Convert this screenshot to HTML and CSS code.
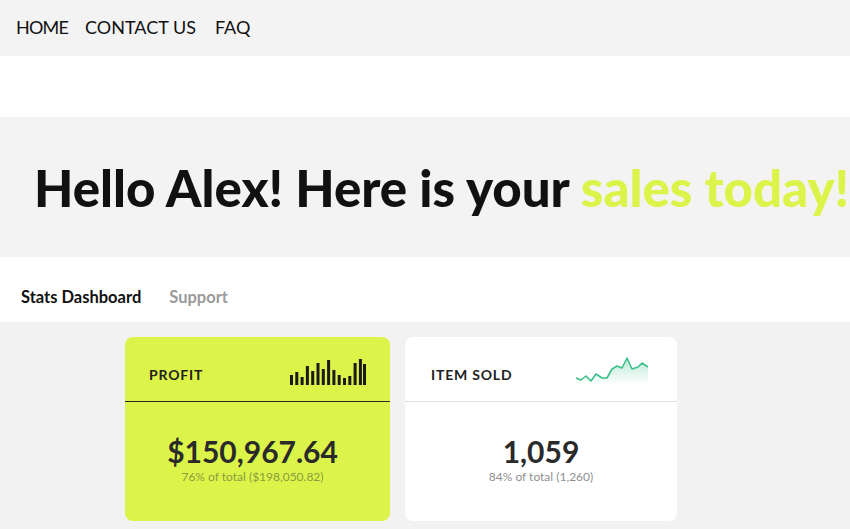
FILE: index.html
```html
<!DOCTYPE html>
<html>
<head>
<meta charset="utf-8">
<link rel="stylesheet" href="styles.css">
</head>
<body>
<nav class="topnav">
  <a class="navlink">HOME</a>
  <a class="navlink">CONTACT US</a>
  <a class="navlink">FAQ</a>
</nav>
<div class="spacer"></div>
<header class="hero">
  <h1 class="hero-title">Hello Alex! Here is your <span class="accent">sales today!</span></h1>
</header>
<div class="tabs">
  <span class="tab active">Stats Dashboard</span>
  <span class="tab">Support</span>
</div>
<main class="content">
  <section class="card card-lime">
    <div class="card-head">
      <span class="card-label">PROFIT</span>
      <svg class="bars" width="76" height="26" viewBox="0 0 76 26">
        <g fill="#1a1a1a">
          <rect x="0" y="16" width="3" height="10"/>
          <rect x="5.3" y="13" width="3" height="13"/>
          <rect x="10.6" y="18" width="3" height="8"/>
          <rect x="15.9" y="7" width="3" height="19"/>
          <rect x="21.2" y="12" width="3" height="14"/>
          <rect x="26.5" y="4" width="3" height="22"/>
          <rect x="31.8" y="10" width="3" height="16"/>
          <rect x="37.1" y="1" width="3" height="25"/>
          <rect x="42.4" y="11" width="3" height="15"/>
          <rect x="47.7" y="16" width="3" height="10"/>
          <rect x="53" y="19" width="3" height="7"/>
          <rect x="58.3" y="17" width="3" height="9"/>
          <rect x="63.6" y="4" width="3" height="22"/>
          <rect x="68.9" y="0" width="3" height="26"/>
          <rect x="73" y="5" width="3" height="21"/>
        </g>
      </svg>
    </div>
    <div class="card-body">
      <div class="card-value">$150,967.64</div>
      <div class="card-sub">76% of total ($198,050.82)</div>
    </div>
  </section>
  <section class="card card-white">
    <div class="card-head">
      <span class="card-label">ITEM SOLD</span>
      <svg class="spark" width="76" height="28" viewBox="0 0 76 28">
        <defs>
          <linearGradient id="sg" x1="0" y1="0" x2="0" y2="1">
            <stop offset="0" stop-color="#3cbf8a" stop-opacity="0.35"/>
            <stop offset="1" stop-color="#3cbf8a" stop-opacity="0"/>
          </linearGradient>
        </defs>
        <path d="M1 21 L6 23 L11 19 L16 24 L21 17 L27 21 L32 21 L37 12 L42 9 L47 11 L52 1 L57 12 L63 10 L67 6 L73 10 L73 28 L1 28 Z" fill="url(#sg)"/>
        <path d="M1 21 L6 23 L11 19 L16 24 L21 17 L27 21 L32 21 L37 12 L42 9 L47 11 L52 1 L57 12 L63 10 L67 6 L73 10" fill="none" stroke="#3cbf8a" stroke-width="1.6" stroke-linejoin="round"/>
      </svg>
    </div>
    <div class="card-body">
      <div class="card-value">1,059</div>
      <div class="card-sub">84% of total (1,260)</div>
    </div>
  </section>
</main>
</body>
</html>
```

FILE: styles.css
```css
* { box-sizing: border-box; }
html, body { margin: 0; padding: 0; }
body {
  background: #f3f2f3;
  font-family: "Lato", "Noto Sans", sans-serif;
  color: #111;
  width: 850px;
  height: 529px;
  overflow: hidden;
}
.topnav {
  height: 56px;
  background: #f3f3f3;
  display: flex;
  align-items: center;
  padding-left: 16px;
  padding-bottom: 3px;
  gap: 17px;
}
.navlink {
  font-family: "Lato", sans-serif;
  font-size: 18px;
  font-weight: 400;
  color: #111;
}
.navlink:first-child { letter-spacing: -0.8px; }
.navlink:nth-child(3) { margin-left: 2px; }
.spacer { height: 61px; background: #fff; }
.hero {
  height: 140px;
  background: #f3f3f3;
  display: flex;
  align-items: center;
  padding-left: 34px;
  overflow: hidden;
  white-space: nowrap;
}
.hero-title {
  margin: 0;
  font-family: "Lato", sans-serif;
  font-weight: 900;
  font-size: 51px;
  color: #111;
}
.accent { color: #dcf34a; }
.tabs {
  height: 65px;
  background: #fff;
  display: flex;
  align-items: center;
  padding-left: 21px;
  gap: 28px;
  padding-top: 14px;
}
.tab {
  font-size: 16.5px;
  font-weight: 700;
  color: #9a9a9a;
}
.tab.active { color: #111; }
.content {
  display: flex;
  gap: 15px;
  padding: 15px 0 0 125px;
}
.card {
  height: 184px;
  border-radius: 8px;
  display: flex;
  flex-direction: column;
}
.card-lime { width: 265px; background: #dcf449; }
.card-white { width: 272px; background: #fff; }
.card-head {
  height: 65px;
  display: flex;
  align-items: center;
  justify-content: space-between;
  border-bottom: 1px solid #2a2a2a;
  padding: 0 24px 0 24px;
}
.card-white .card-head {
  border-bottom: 1px solid #dedede;
  padding: 0 26px 0 26px;
}
.card-label {
  font-size: 14px;
  font-weight: 700;
  letter-spacing: 0.8px;
  color: #222;
  padding-top: 11px;
}
.bars { margin-top: 6px; }
.spark { margin-top: 3px; }
.card-body {
  flex: 1;
  display: flex;
  flex-direction: column;
  align-items: center;
  padding-top: 31px;
}
.card-lime .card-body { padding-right: 10px; }
.card-value {
  font-size: 30px;
  font-weight: 700;
  color: #2a2a2a;
  line-height: 36px;
}
.card-sub {
  font-size: 12px;
  color: #8f8f8f;
  margin-top: 0;
}
.card-lime .card-sub { color: #8a9a40; }
```
